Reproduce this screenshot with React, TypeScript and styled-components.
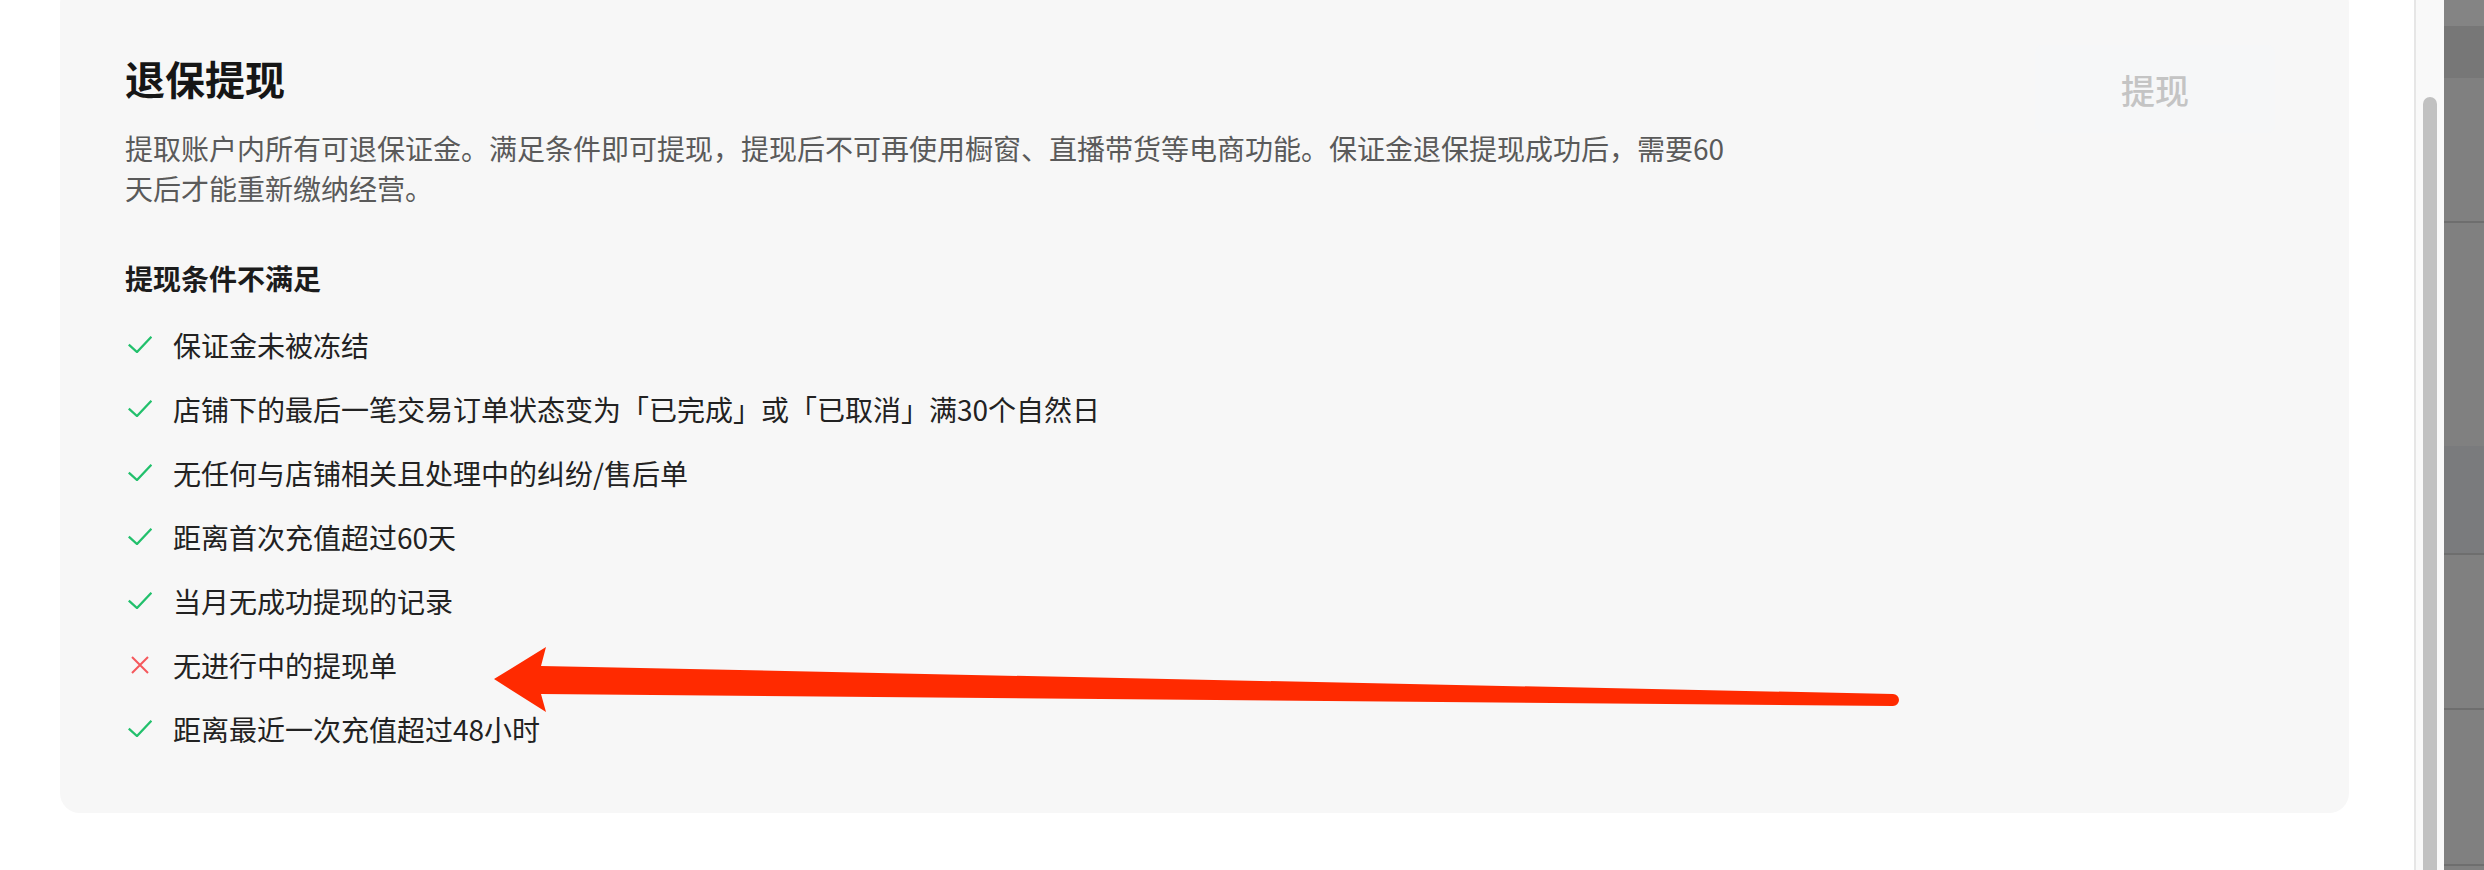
import React from 'react';
import styled, {createGlobalStyle} from 'styled-components';

const GlobalStyle = createGlobalStyle`
  html, body {
    margin: 0;
    padding: 0;
    background: #ffffff;
    overflow: hidden;
  }
  body {
    font-family: "Noto Sans CJK SC", "Noto Sans", sans-serif;
  }
`

type Condition = {
    text: string;
    passed: boolean;
}

const conditions: Condition[] = [
    {text: '保证金未被冻结', passed: true},
    {text: '店铺下的最后一笔交易订单状态变为「已完成」或「已取消」满30个自然日', passed: true},
    {text: '无任何与店铺相关且处理中的纠纷/售后单', passed: true},
    {text: '距离首次充值超过60天', passed: true},
    {text: '当月无成功提现的记录', passed: true},
    {text: '无进行中的提现单', passed: false},
    {text: '距离最近一次充值超过48小时', passed: true},
]

// right hand panel stripes (height, colour, divider under it)
const stripes = [
    {h: 26, color: '#848484', line: false},
    {h: 52, color: '#777777', line: false},
    {h: 143, color: '#808080', line: true},
    {h: 223, color: '#808080', line: false},
    {h: 107, color: '#7a7b7d', line: true},
    {h: 153, color: '#808080', line: true},
    {h: 154, color: '#808080', line: true},
]

const CheckIcon = () => (
    <svg width="24" height="17" viewBox="0 0 24 17" fill="none">
        <polyline points="0.8,8.6 9,16 23.4,0.8" stroke="#22c06c" strokeWidth="2.3" strokeLinejoin="miter"/>
    </svg>
)

const CrossIcon = () => (
    <svg width="18" height="18" viewBox="0 0 18 18" fill="none">
        <path d="M1 1L17 17M17 1L1 17" stroke="#f5585c" strokeWidth="2"/>
    </svg>
)

export default function App() {
    return (
        <Page>
            <GlobalStyle/>
            <Content>
                <Card>
                    <Header>
                        <Intro>
                            <Title>退保提现</Title>
                            <Description>
                                提取账户内所有可退保证金。满足条件即可提现，提现后不可再使用橱窗、直播带货等电商功能。保证金退保提现成功后，需要60天后才能重新缴纳经营。
                            </Description>
                        </Intro>
                        <WithdrawButton disabled>提现</WithdrawButton>
                    </Header>
                    <SubTitle>提现条件不满足</SubTitle>
                    <ConditionList>
                        {conditions.map((c) => (
                            <ConditionItem key={c.text}>
                                <IconBox>{c.passed ? <CheckIcon/> : <CrossIcon/>}</IconBox>
                                <span>{c.text}</span>
                            </ConditionItem>
                        ))}
                    </ConditionList>
                </Card>
            </Content>
            <Rail>
                <Track>
                    <Thumb/>
                </Track>
                <SidePanel>
                    {stripes.map((s, i) => (
                        <Stripe key={i} $h={s.h} $color={s.color} $line={s.line}/>
                    ))}
                </SidePanel>
            </Rail>
            <Annotation width="2484" height="870" viewBox="0 0 2484 870">
                <path
                    d="M494 679 L546 647 L541 666 L1893 694 A6 6 0 0 1 1893 706 L541 694 L546 712 Z"
                    fill="#ff2a00"
                />
            </Annotation>
        </Page>
    );
}

const Page = styled.div`
  position: relative;
  display: flex;
  width: 2484px;
  height: 870px;
  overflow: hidden;
  background: #ffffff;
`
const Content = styled.main`
  flex: 1;
  padding: 0 65px 0 60px;
`
const Card = styled.section`
  margin-top: -16px;
  padding: 66px 74px 64px 65px;
  background: #f7f7f7;
  border-radius: 20px;
`
const Header = styled.div`
  display: flex;
  justify-content: space-between;
  align-items: flex-start;
`
const Intro = styled.div`
  display: flex;
  flex-direction: column;
  gap: 22px;
`
const Title = styled.h1`
  margin: 0;
  font-size: 40px;
  line-height: 56px;
  font-weight: 600;
  color: #161616;
`
const Description = styled.p`
  margin: 0;
  width: 1620px;
  font-size: 28px;
  line-height: 40px;
  color: #5a5a5a;
`
const WithdrawButton = styled.button`
  margin-top: -5px;
  width: 240px;
  height: 88px;
  border: none;
  border-radius: 8px;
  background: #f6f7f8;
  color: #c4c4c4;
  font-family: "Noto Sans CJK SC", sans-serif;
  font-size: 34px;
  font-weight: 500;
  cursor: not-allowed;
`
const SubTitle = styled.h2`
  margin: 50px 0 0;
  font-size: 28px;
  line-height: 40px;
  font-weight: 600;
  color: #1c1c1c;
`
const ConditionList = styled.ul`
  list-style: none;
  margin: 27px 0 0;
  padding: 0;
  display: flex;
  flex-direction: column;
  gap: 24px;
`
const ConditionItem = styled.li`
  display: flex;
  align-items: center;
  font-size: 28px;
  line-height: 40px;
  color: #222222;
`
const IconBox = styled.span`
  display: flex;
  align-items: center;
  justify-content: center;
  width: 30px;
  margin-right: 18px;
  margin-top: -1px;
`
const Rail = styled.aside`
  display: flex;
  flex-shrink: 0;
  border-left: 2px solid #e6e6e6;
`
const Track = styled.div`
  width: 28px;
  background: #f9f9f9;
  display: flex;
  justify-content: center;
`
const Thumb = styled.div`
  margin-top: 97px;
  width: 14px;
  height: 800px;
  border-radius: 7px;
  background: #c1c1c1;
`
const SidePanel = styled.div`
  width: 40px;
  display: flex;
  flex-direction: column;
  background: #808080;
`
const Stripe = styled.div<{ $h: number; $color: string; $line: boolean }>`
  height: ${p => p.$h}px;
  flex-shrink: 0;
  background: ${p => p.$color};
  border-bottom: ${p => (p.$line ? '2px solid #6e6e6e' : 'none')};
`
const Annotation = styled.svg`
  position: absolute;
  left: 0;
  top: 0;
  pointer-events: none;
`
